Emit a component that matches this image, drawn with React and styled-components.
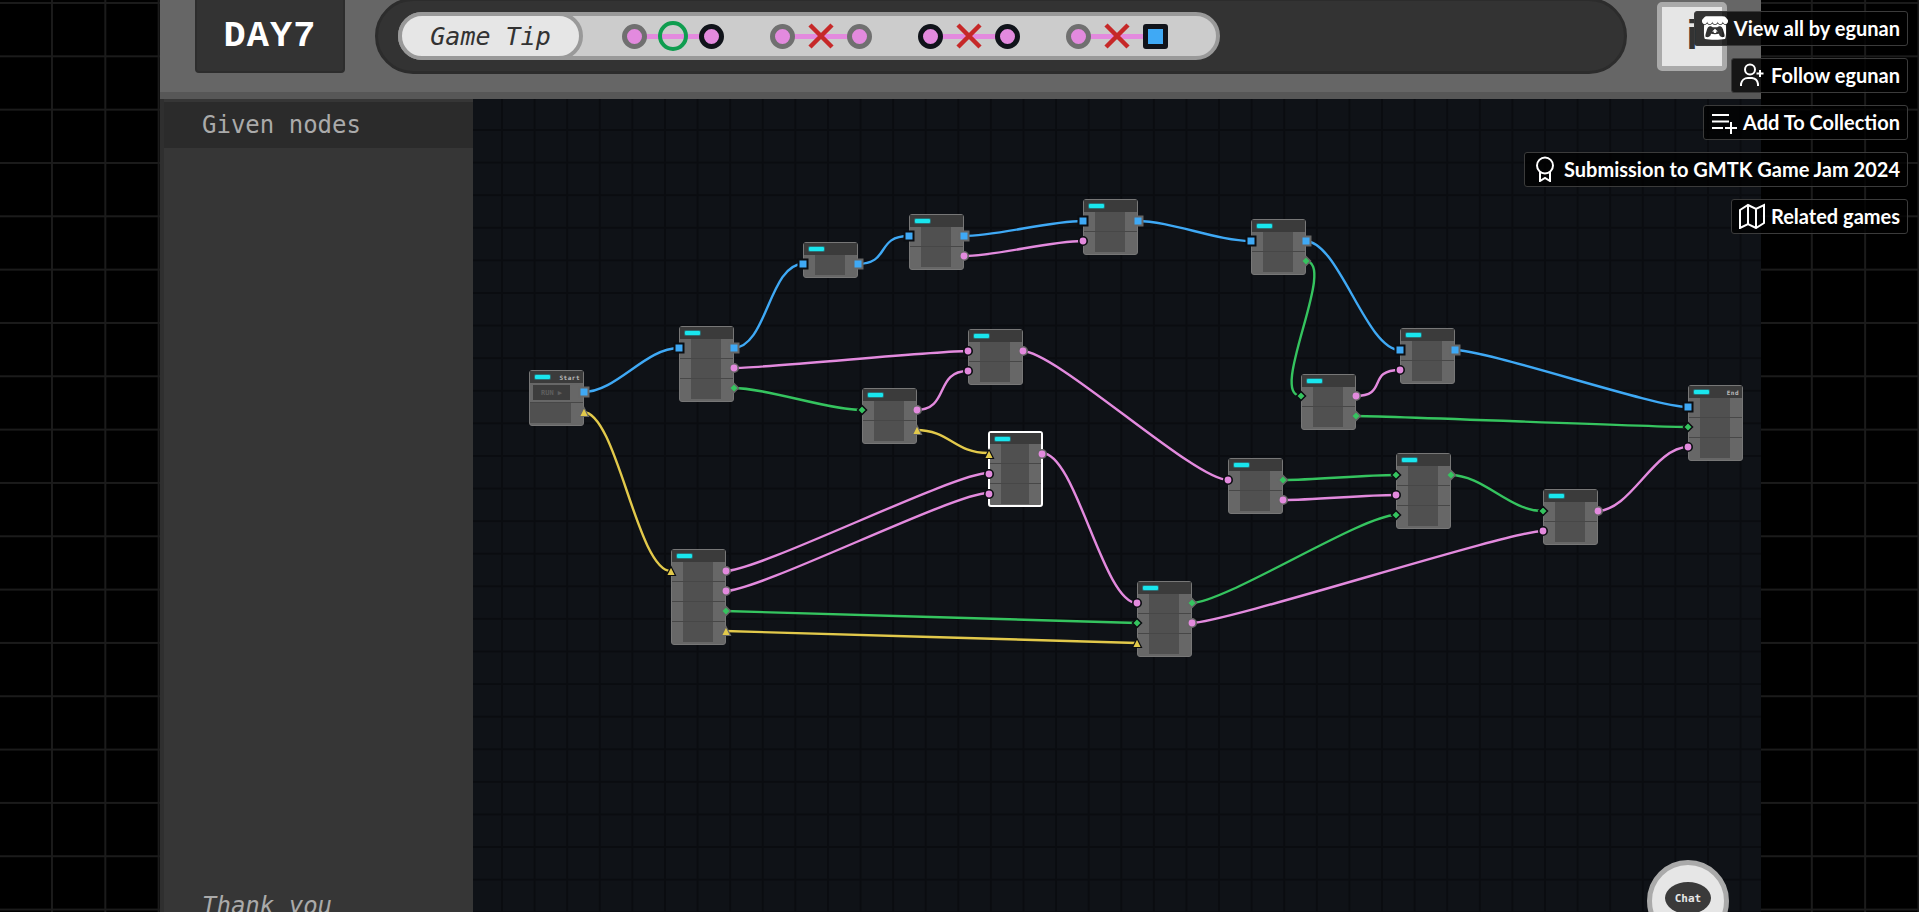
import React from "react";
import styled, { createGlobalStyle } from "styled-components";
import { SiItchdotio } from "react-icons/si";

const GlobalStyle = createGlobalStyle`
  html, body {
    margin: 0;
    height: 100%;
    overflow: hidden;
    background-color: #000;
    background-image:
      linear-gradient(to right, #1b1b1b 2px, transparent 2px),
      linear-gradient(to bottom, #1b1b1b 2px, transparent 2px);
    background-size: 53.33px 53.33px;
    background-position: 51px 2px;
  }
  * { box-sizing: border-box; }
`;

const Page = styled.div`
  position: relative;
  width: 1919px;
  height: 912px;
  padding-left: 160px;
  overflow: hidden;
`;

const Game = styled.div`
  width: 1601px;
  height: 912px;
  display: flex;
  flex-direction: column;
  font-family: "DejaVu Sans Mono", "Liberation Mono", monospace;
`;

const Header = styled.header`
  height: 99px;
  flex-shrink: 0;
  display: flex;
  align-items: flex-start;
  padding-left: 35px;
  background: #666;
  border-bottom: 7px solid #575757;
`;

const DayBox = styled.div`
  width: 150px;
  height: 73px;
  display: flex;
  align-items: center;
  justify-content: center;
  background: #333;
  border: 2px solid #2d2d2d;
  border-top: 0;
  border-radius: 0 0 4px 4px;
  color: #fff;
  font-family: "Liberation Mono", monospace;
  font-size: 37px;
  font-weight: 700;
  letter-spacing: 1px;
`;

const TipTrack = styled.div`
  width: 1252px;
  height: 76px;
  margin: -2px 0 0 30px;
  padding: 11px 0 0 20px;
  background: #333;
  border: 3px solid #2c2c2c;
  border-radius: 38px;
`;

const TipPill = styled.div`
  width: 822px;
  height: 48px;
  display: flex;
  align-items: center;
  gap: 46px;
  background: #ccc;
  border: 4px solid #999;
  border-radius: 24px;
`;

const TipLabel = styled.div`
  width: 185px;
  height: 48px;
  margin: 0 -7px 0 -4px;
  display: flex;
  align-items: center;
  justify-content: center;
  background: #e6e6e6;
  border: 4px solid #999;
  border-radius: 24px;
  color: #333;
  font-size: 25px;
  font-style: italic;
`;

const TipGroup = styled.div`
  position: relative;
  width: 102px;
  height: 30px;
  display: flex;
  align-items: center;
  justify-content: space-between;

  &::before {
    content: "";
    position: absolute;
    left: 6px;
    right: 6px;
    top: 13px;
    height: 5px;
    background: #e38ade;
  }
`;

const TipPort = styled.span`
  position: relative;
  width: 25px;
  height: 25px;
  border-radius: ${(p) => (p.$square ? "3px" : "50%")};
  background: ${(p) => (p.$square ? "#3fa9f5" : "#e38ade")};
  border: 5px solid ${(p) => (p.$dark ? "#10131a" : "#707070")};
`;

const TipRing = styled.span`
  position: relative;
  width: 30px;
  height: 30px;
  border-radius: 50%;
  border: 4px solid #0f9d4f;
`;

const TipCross = styled.svg`
  position: relative;
  width: 26px;
  height: 26px;
`;

const InfoButton = styled.div`
  width: 70px;
  height: 69px;
  margin: 2px 0 0 30px;
  display: flex;
  justify-content: center;
  padding-top: 3px;
  background: #e6e6e6;
  border: 5px solid #aaa;
  border-radius: 5px;
  color: #333;
  font-family: "Liberation Sans", sans-serif;
  font-size: 40px;
  font-weight: 700;
  line-height: 50px;
`;

const Main = styled.main`
  flex: 1;
  display: flex;
  min-height: 0;
`;

const Sidebar = styled.aside`
  width: 313px;
  flex-shrink: 0;
  overflow: hidden;
  padding-top: 3px;
  background: #363636;
  border-left: 4px solid #2f2f2f;
`;

const SideTitle = styled.div`
  height: 46px;
  margin-left: -2px;
  padding-left: 40px;
  display: flex;
  align-items: center;
  background: #2b2b2b;
  color: #aaa;
  font-size: 24px;
`;

const SideFoot = styled.div`
  margin-top: 743px;
  padding-left: 38px;
  color: #aaa;
  font-size: 24px;
  font-style: italic;
  line-height: 30px;
`;

const Canvas = styled.section`
  position: relative;
  flex: 1;
  overflow: hidden;
  background-color: #0f1217;
  background-image:
    linear-gradient(to right, #0a0c10 2px, transparent 2px),
    linear-gradient(to bottom, #0a0c10 2px, transparent 2px);
  background-size: 32.6px 32.6px;
  background-position: 28px 30px;
`;

const Wires = styled.svg`
  position: absolute;
  inset: 0;
  width: 100%;
  height: 100%;
`;

const NodeBox = styled.div`
  position: absolute;
  left: ${(p) => p.$x - ORIGIN_X}px;
  top: ${(p) => p.$y - ORIGIN_Y}px;
  width: 55px;
  height: ${(p) => p.$h}px;
  background: #676767;
  border: ${(p) => (p.$selected ? "2px solid #fff" : "1px solid #777")};
  border-radius: 3px;
`;

const NodeHead = styled.div`
  position: relative;
  height: ${(p) => (p.$selected ? "11px" : "12px")};
  display: flex;
  align-items: center;
  justify-content: space-between;
  padding: 0 3px 0 5px;
  background: #3b3b3b;
`;

const Lamp = styled.span`
  width: 15px;
  height: 4px;
  border-radius: 1px;
  background: #19e6ee;
  box-shadow: 0 0 0 1px #2c6f74;
`;

const NodeName = styled.span`
  color: #bbb;
  font-size: 6px;
  font-weight: 700;
  letter-spacing: 0.5px;
`;

const NodeRow = styled.div`
  height: 20px;
  display: grid;
  grid-template-columns: ${(p) => (p.$noLeft ? "1fr 12px" : "11px 1fr 12px")};
  border-bottom: 1px solid #474747;

  &:last-of-type {
    border-bottom: 0;
  }
`;

const NodeMiddle = styled.div`
  background: #505050;
`;

const RunBox = styled.div`
  margin: 2px 1px 2px 3px;
  display: flex;
  align-items: center;
  justify-content: center;
  background: #3d3d3d;
  color: #5f5f5f;
  font-size: 7px;
  font-weight: 700;
`;

const PortMark = styled.svg`
  position: absolute;
  top: ${(p) => 14 + p.$slot * 20}px;
  ${(p) => (p.$out ? "right: -8px;" : "left: -8px;")}
  width: 14px;
  height: 14px;
  overflow: visible;
`;

const Links = styled.nav`
  position: absolute;
  top: 11px;
  right: 11px;
  display: flex;
  flex-direction: column;
  align-items: flex-end;
  gap: 12px;
`;

const LinkButton = styled.a`
  height: 35px;
  display: flex;
  align-items: center;
  gap: 6px;
  padding: 0 7px 2px;
  background: rgba(0, 0, 0, 0.78);
  border: 1px solid #3b3b3b;
  border-radius: 3px;
  color: #fff;
  font-family: Lato, sans-serif;
  font-size: 20px;
  font-weight: 700;
  white-space: nowrap;

  svg {
    flex-shrink: 0;
  }
`;

const ChatButton = styled.div`
  position: absolute;
  left: 1647px;
  top: 860px;
  width: 82px;
  height: 82px;
  display: flex;
  justify-content: center;
  padding-top: 17px;
  background: #e6e6e6;
  border: 5px solid #aaa;
  border-radius: 50%;
`;

const ChatLabel = styled.span`
  width: 46px;
  height: 32px;
  display: flex;
  align-items: center;
  justify-content: center;
  background: #3a3a3a;
  border-radius: 50%;
  color: #e6e6e6;
  font-family: "DejaVu Sans Mono", monospace;
  font-size: 11px;
  font-weight: 700;
`;

const ORIGIN_X = 473;
const ORIGIN_Y = 99;

const COLORS = { blue: "#3fa9f5", pink: "#e38ade", green: "#35c45f", yellow: "#e2c94b" };

const nodes = {
  start: { x: 529, y: 370, rows: 2, start: true, name: "Start", out: ["blue", "yellow"] },
  a: { x: 679, y: 326, rows: 3, in: ["blue"], out: ["blue", "pink", "green"] },
  b: { x: 803, y: 242, rows: 1, in: ["blue"], out: ["blue"] },
  c: { x: 909, y: 214, rows: 2, in: ["blue"], out: ["blue", "pink"] },
  d: { x: 1083, y: 199, rows: 2, in: ["blue", "pink"], out: ["blue"] },
  e: { x: 1251, y: 219, rows: 2, in: ["blue"], out: ["blue", "green"] },
  f: { x: 968, y: 329, rows: 2, in: ["pink", "pink"], out: ["pink"] },
  g: { x: 862, y: 388, rows: 2, in: ["green"], out: ["pink", "yellow"] },
  h: { x: 988, y: 431, rows: 3, selected: true, in: ["yellow", "pink", "pink"], out: ["pink"] },
  i: { x: 1228, y: 458, rows: 2, in: ["pink"], out: ["green", "pink"] },
  j: { x: 1301, y: 374, rows: 2, in: ["green"], out: ["pink", "green"] },
  k: { x: 1400, y: 328, rows: 2, in: ["blue", "pink"], out: ["blue"] },
  l: { x: 1396, y: 453, rows: 3, in: ["green", "pink", "green"], out: ["green"] },
  m: { x: 1543, y: 489, rows: 2, in: ["green", "pink"], out: ["pink"] },
  n: { x: 1688, y: 385, rows: 3, name: "End", in: ["blue", "green", "pink"], out: [] },
  o: { x: 671, y: 549, rows: 4, in: ["yellow"], out: ["pink", "pink", "green", "yellow"] },
  p: { x: 1137, y: 581, rows: 3, in: ["pink", "green", "yellow"], out: ["green", "pink"] },
};

// from node, out slot, to node, in slot, colour
const edges = [
  ["start", 0, "a", 0, "blue"],
  ["start", 1, "o", 0, "yellow"],
  ["a", 0, "b", 0, "blue"],
  ["a", 1, "f", 0, "pink"],
  ["a", 2, "g", 0, "green"],
  ["b", 0, "c", 0, "blue"],
  ["c", 0, "d", 0, "blue"],
  ["c", 1, "d", 1, "pink"],
  ["d", 0, "e", 0, "blue"],
  ["e", 0, "k", 0, "blue"],
  ["e", 1, "j", 0, "green"],
  ["g", 0, "f", 1, "pink"],
  ["g", 1, "h", 0, "yellow"],
  ["f", 0, "i", 0, "pink"],
  ["h", 0, "p", 0, "pink"],
  ["o", 0, "h", 1, "pink"],
  ["o", 1, "h", 2, "pink"],
  ["o", 2, "p", 1, "green"],
  ["o", 3, "p", 2, "yellow"],
  ["i", 0, "l", 0, "green"],
  ["i", 1, "l", 1, "pink"],
  ["j", 0, "k", 1, "pink"],
  ["j", 1, "n", 1, "green"],
  ["k", 0, "n", 0, "blue"],
  ["l", 0, "m", 0, "green"],
  ["m", 0, "n", 2, "pink"],
  ["p", 0, "l", 2, "green"],
  ["p", 1, "m", 1, "pink"],
];

const wirePath = ([from, outSlot, to, inSlot]) => {
  const x1 = nodes[from].x + 54 - ORIGIN_X;
  const y1 = nodes[from].y + 22 + outSlot * 20 - ORIGIN_Y;
  const x2 = nodes[to].x - ORIGIN_X;
  const y2 = nodes[to].y + 22 + inSlot * 20 - ORIGIN_Y;
  return `M${x1} ${y1} C${x1 + 34} ${y1} ${x2 - 34} ${y2} ${x2} ${y2}`;
};

const Port = ({ kind, slot, out }) => {
  const ring = out ? "#666" : "#0b0d11";
  const fill = COLORS[kind];
  return (
    <PortMark $slot={slot} $out={out} viewBox="0 0 14 14">
      {kind === "blue" && <rect x="2.5" y="2.5" width="9" height="9" fill={fill} stroke={ring} strokeWidth="2" />}
      {kind === "pink" && <circle cx="7" cy="7" r="4.2" fill={fill} stroke={ring} strokeWidth="1.6" />}
      {kind === "green" && <path d="M7 2.5 11.5 7 7 11.5 2.5 7Z" fill={fill} stroke={ring} strokeWidth="1.5" />}
      {kind === "yellow" && <path d="M7 2.5 11.5 11.5H2.5Z" fill={fill} stroke={ring} strokeWidth="1.2" />}
    </PortMark>
  );
};

const GraphNode = ({ node }) => (
  <NodeBox $x={node.x} $y={node.y} $h={node.rows * 20 + 16} $selected={node.selected}>
    <NodeHead $selected={node.selected}>
      <Lamp />
      {node.name && <NodeName>{node.name}</NodeName>}
    </NodeHead>
    {Array.from({ length: node.rows }, (_, i) => (
      <NodeRow key={i} $noLeft={node.start}>
        {!node.start && <div />}
        {node.start && i === 0 ? (
          <RunBox>RUN ▶</RunBox>
        ) : (
          <NodeMiddle />
        )}
        <div />
      </NodeRow>
    ))}
    {(node.in || []).map((kind, i) => (
      <Port key={i} kind={kind} slot={i} />
    ))}
    {node.out.map((kind, i) => (
      <Port key={i} kind={kind} slot={i} out />
    ))}
  </NodeBox>
);

const Cross = () => (
  <TipCross viewBox="0 0 26 26">
    <path d="M2 2 24 24M24 2 2 24" stroke="#c62828" strokeWidth="4.5" fill="none" />
  </TipCross>
);

const iconProps = {
  fill: "none",
  stroke: "currentColor",
  strokeWidth: 2,
  viewBox: "0 0 26 26",
  width: 26,
  height: 26,
};

const links = [
  { label: "View all by egunan", icon: <SiItchdotio size={26} /> },
  {
    label: "Follow egunan",
    icon: (
      <svg {...iconProps}>
        <circle cx="11" cy="7.5" r="5" />
        <path d="M2 24v-2a7 7 0 0 1 7-6h4a7 7 0 0 1 6 6v2M21 8v7M17.5 11.5h7" />
      </svg>
    ),
  },
  {
    label: "Add To Collection",
    icon: (
      <svg {...iconProps}>
        <path d="M1 6h17M1 12.5h17M1 19h11M20 13v12M14 19h12" />
      </svg>
    ),
  },
  {
    label: "Submission to GMTK Game Jam 2024",
    icon: (
      <svg {...iconProps}>
        <circle cx="13" cy="9.5" r="8" />
        <path d="M8 16v9l5-3 5 3v-9" />
      </svg>
    ),
  },
  {
    label: "Related games",
    icon: (
      <svg {...iconProps}>
        <path d="M1 7 9 2l8 4 8-4v18l-8 5-8-4-8 4ZM9 2v19M17 6v19" />
      </svg>
    ),
  },
];

const App = () => (
  <Page>
    <GlobalStyle />
    <Game>
      <Header>
        <DayBox>DAY7</DayBox>
        <TipTrack>
          <TipPill>
            <TipLabel>Game Tip</TipLabel>
            <TipGroup>
              <TipPort />
              <TipRing />
              <TipPort $dark />
            </TipGroup>
            <TipGroup>
              <TipPort />
              <Cross />
              <TipPort />
            </TipGroup>
            <TipGroup>
              <TipPort $dark />
              <Cross />
              <TipPort $dark />
            </TipGroup>
            <TipGroup>
              <TipPort />
              <Cross />
              <TipPort $dark $square />
            </TipGroup>
          </TipPill>
        </TipTrack>
        <InfoButton>i</InfoButton>
      </Header>
      <Main>
        <Sidebar>
          <SideTitle>Given nodes</SideTitle>
          <SideFoot>Thank you</SideFoot>
        </Sidebar>
        <Canvas>
          <Wires>
            {edges.map((edge, i) => (
              <path key={i} d={wirePath(edge)} fill="none" stroke={COLORS[edge[4]]} strokeWidth="2.4" />
            ))}
          </Wires>
          {Object.keys(nodes).map((id) => (
            <GraphNode key={id} node={nodes[id]} />
          ))}
        </Canvas>
      </Main>
    </Game>
    <ChatButton>
      <ChatLabel>Chat</ChatLabel>
    </ChatButton>
    <Links>
      {links.map((link) => (
        <LinkButton key={link.label}>
          {link.icon}
          {link.label}
        </LinkButton>
      ))}
    </Links>
  </Page>
);

export default App;
